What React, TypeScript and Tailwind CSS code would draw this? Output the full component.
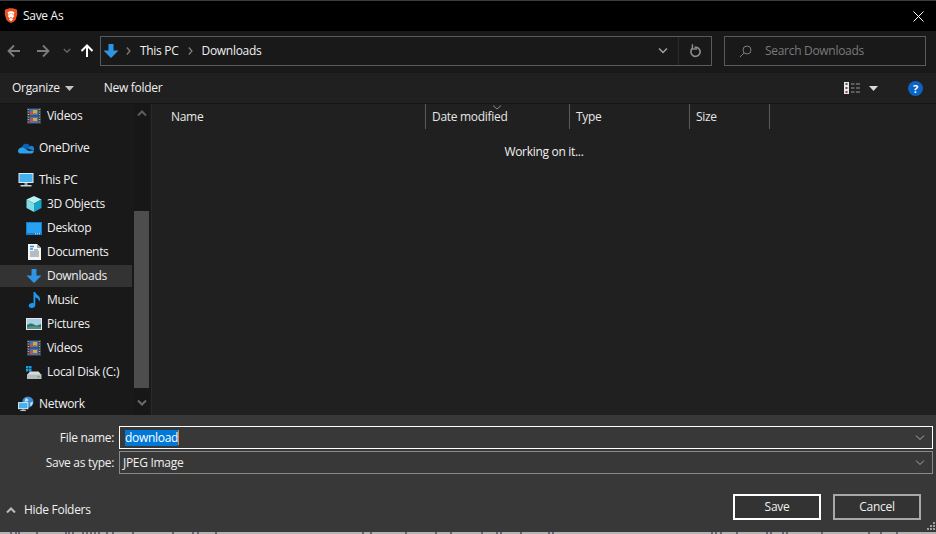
import React from "react";

function Brave() {
  return (
    <svg width="14" height="16" viewBox="0 0 14 16">
      <path d="M3.500 1 5 .2h4L10.500 1l2 .2.9 1.800-.5 1.300.5 1.400-1.900 6.300-2 1.700L7 14.900l-2.500-1.200-2-1.700L.6 5.700l.5-1.400L.6 3l.9-1.800z" fill="#f0501e" />
      <path d="M3.500 4.500 5.600 3.300h2.800L10.500 4.500 9.300 7l1 1L8 10.500l1 1L7 13l-2-1.500 1-1L3.700 8l1-1z" fill="#fff" />
      <path d="M5.800 8.500 7 9.500l1.200-1L7 11z" fill="#f0501e" />
      <path d="M5 5.500h1.500L6 6.800zM9 5.500H7.500L8 6.800z" fill="#f0501e" />
    </svg>
  );
}

function BlueDown({ s = 16 }: { s?: number }) {
  return (
    <svg width={s} height={s} viewBox="0 0 16 16">
      <path d="M5.500 1h5v6.500H15.500L8 15 .5 7.500h5z" fill="#2e95e4" />
    </svg>
  );
}

function VideoIcon() {
  return (
    <svg width="14" height="16" viewBox="0 0 14 16">
      <rect width="14" height="16" fill="#3a3a3a" />
      <rect x="2.500" y="1" width="9" height="6.500" fill="#3f74c4" />
      <rect x="2.500" y="8.500" width="9" height="6.500" fill="#3f74c4" />
      <rect x="6" y="2" width="4" height="3.500" fill="#d9a62e" />
      <rect x="3" y="4" width="3" height="3" fill="#c9503f" />
      <rect x="6" y="10" width="4" height="3" fill="#d9a62e" />
      <rect x="3" y="11" width="3" height="3" fill="#c9503f" />
      <path d="M.8 1.500h1M.8 4h1M.8 6.500h1M.8 9h1M.8 11.500h1M.8 14h1M12.200 1.500h1M12.200 4h1M12.200 6.500h1M12.200 9h1M12.200 11.500h1M12.200 14h1" stroke="#cfcfcf" strokeWidth="1" />
    </svg>
  );
}

function OneDrive() {
  return (
    <svg width="16" height="12" viewBox="0 0 16 12">
      <path d="M4 5.500A4.200 4.200 0 0 1 12 4.200l-4 3.300-3-1.800z" fill="#0a62b5" />
      <path d="M12 4.200A3 3 0 0 1 15.800 8.500L9 6.500z" fill="#1583d8" />
      <path d="M4.600 5.200 11 9l4.800-.5c0 2-1 3-2.300 3H2.500C.5 11.500 0 10 0 9c0-2 2-3.800 4.600-3.800z" fill="#2ca0ea" />
    </svg>
  );
}

function ThisPC() {
  return (
    <svg width="16" height="16" viewBox="0 0 16 16">
      <rect x=".5" y="1" width="15" height="10" fill="#dbe9f2" />
      <rect x="1.500" y="2" width="13" height="8" fill="#45b0ee" />
      <rect x="6.500" y="11" width="3" height="2" fill="#8fa3b0" />
      <rect x="2.500" y="13" width="11" height="1.500" fill="#c8d2d9" />
    </svg>
  );
}

function Cube() {
  return (
    <svg width="16" height="16" viewBox="0 0 16 16">
      <path d="M8 0 15.500 3.500 8 7.500.5 3.500z" fill="#b7f2f5" />
      <path d="M.5 3.500 8 7.500V16L.5 12z" fill="#7fdce6" />
      <path d="M15.500 3.500 8 7.500V16l7.500-4z" fill="#15a5c9" />
    </svg>
  );
}

function DesktopIcon() {
  return (
    <svg width="16" height="13" viewBox="0 0 16 13">
      <rect x="0" y="0" width="16" height="13" fill="#0e7fd6" />
      <rect x="1" y="1" width="14" height="10" fill="#2ba0ee" />
      <path d="M9 11.800h1M11 11.800h1M13 11.800h1" stroke="#e6f4fd" strokeWidth="1" />
    </svg>
  );
}

function DocIcon() {
  return (
    <svg width="13" height="16" viewBox="0 0 13 16">
      <path d="M0 0h9l4 4v12H0z" fill="#f4f6f7" />
      <path d="M9 0l4 4H9z" fill="#9aa6ad" />
      <path d="M2 8h9M2 10h9M2 12h9M6 6h4" stroke="#75838b" strokeWidth="1" />
      <path d="M2 2.500h4M2 5h3" stroke="#2b8fdc" strokeWidth="1.500" />
    </svg>
  );
}

function MusicIcon() {
  return (
    <svg width="13" height="16" viewBox="0 0 13 16">
      <path d="M5.500 0h1.800c.3 2.500 4.700 3.500 4.700 7 0 1.200-.4 2-1 2.800.2-2.500-2-3.800-3.700-4.500V13c0 1.700-1.700 3-3.700 3C1.800 16 .7 15 .7 13.800c0-1.500 1.600-2.800 3.500-2.800.5 0 .9.100 1.300.2z" fill="#1c97ea" />
    </svg>
  );
}

function PicturesIcon() {
  return (
    <svg width="16" height="12" viewBox="0 0 16 12">
      <rect width="16" height="12" fill="#e4e8ea" />
      <rect x="1" y="1" width="14" height="10" fill="#a8cfe2" />
      <path d="M1 7c3-2 5-2 7-.5s4 1 7-.5v5H1z" fill="#2e7768" />
      <path d="M1 9c4-1 9-1 14 0v2H1z" fill="#5c8f88" />
    </svg>
  );
}

function DiskIcon() {
  return (
    <svg width="16" height="13" viewBox="0 0 16 13">
      <path d="M0 0h2.500v2.500H0zM3 0h2.500v2.500H3zM0 3h2.500v2.500H0zM3 3h2.500v2.500H3z" fill="#15a0ea" />
      <path d="M4 5.500h8.500L15.500 9H1z" fill="#d8dde0" />
      <rect x="1" y="8.500" width="14.500" height="4.500" fill="#b6bdbf" />
      <rect x="11.500" y="10" width="2" height="1.500" fill="#4cc04c" />
    </svg>
  );
}

function NetworkIcon() {
  return (
    <svg width="17" height="16" viewBox="0 0 17 16">
      <circle cx="10.500" cy="6" r="6" fill="#3d8ad0" />
      <path d="M8 1.500c2 .5 3.500 1.500 3 3-1 1-3 .5-4 1.500zM13 6.500l2.800-1c0 2.500-1 4-2.800 5z" fill="#bfe1f4" />
      <rect x="0" y="6" width="11" height="7.500" fill="#dbeaf3" />
      <rect x="1" y="7" width="9" height="5.500" fill="#45b0ee" />
      <rect x="4" y="13.500" width="3" height="1" fill="#8fa3b0" />
      <rect x="2.500" y="14.500" width="6" height="1" fill="#c8d2d9" />
    </svg>
  );
}

function Row({ icon, label, active, level = 1 }: { icon: React.ReactNode; label: string; active?: boolean; level?: number }) {
  return (
    <div className={`flex h-[22px] items-center ${active ? "bg-[#333333]" : ""} ${level === 1 ? "pl-[26px]" : "pl-[18px]"}`}>
      <span className="flex w-[16px] shrink-0 items-center justify-center">{icon}</span>
      <span className="ml-[5px]">{label}</span>
    </div>
  );
}

function Chevron({ className = "", stroke = "#8a8a8a", w = 1.500, up = false }: { className?: string; stroke?: string; w?: number; up?: boolean }) {
  return (
    <svg width="10" height="6" viewBox="0 0 10 6" className={className}>
      <path d={up ? "M1 5.500 5 1.500l4 4" : "M1 .5l4 4 4-4"} fill="none" stroke={stroke} strokeWidth={w} />
    </svg>
  );
}

function Arrow({ color, dir }: { color: string; dir: "l" | "r" | "u" }) {
  const rot = dir === "l" ? "" : dir === "r" ? "rotate-180" : "rotate-90";
  return (
    <svg width="14" height="14" viewBox="0 0 14 14" className={rot}>
      <path d="M13 7H2M7 1.500 1.500 7 7 12.500" fill="none" stroke={color} strokeWidth={dir === "u" ? 2 : 1.800} />
    </svg>
  );
}

function HeaderCell({ w, label, sort }: { w: string; label: string; sort?: boolean }) {
  return (
    <div className={`relative flex h-[25px] items-center border-r border-[#5a5a5a] ${w}`}>
      {sort && (
        <svg width="10" height="5" viewBox="0 0 10 5" className="absolute left-[66px] top-[1px]">
          <path d="M1 .5 5 4 9 .5" fill="none" stroke="#8a8a8a" strokeWidth="1" />
        </svg>
      )}
      <span>{label}</span>
    </div>
  );
}

const specks = [10, 15, 18, 36, 65, 68, 72, 82, 86, 90, 94, 98, 106, 112, 132, 172, 192, 197, 215, 362, 370, 405, 435, 450, 481, 496, 500, 520, 548, 552, 711, 715, 720, 736, 766, 770, 782, 786, 821, 868, 880, 896];

export default function App() {
  return (
    <div className="flex h-[534px] w-[936px] flex-col overflow-hidden bg-[#191919] text-[12px] leading-[16px] tracking-[-0.3px] text-[#f0f0f0] [font-family:'Open_Sans','Noto_Sans',sans-serif]">
      {/* title bar */}
      <div className="h-px bg-[#3c3c3c]" />
      <div className="flex h-[30px] items-center bg-black pl-[4px] pr-[12px]">
        <Brave />
        <span className="ml-[5px] text-[#f4f4f4]">Save As</span>
        <svg width="11" height="11" viewBox="0 0 11 11" className="ml-auto">
          <path d="M.5.500l10 10M10.500.500l-10 10" stroke="#fff" strokeWidth="1" />
        </svg>
      </div>

      {/* navigation */}
      <div className="flex h-[42px] items-center bg-[#191919] pb-[2px] pl-[7px]">
        <Arrow color="#7c7c7c" dir="l" />
        <span className="ml-[15px]"><Arrow color="#7c7c7c" dir="r" /></span>
        <span className="ml-[13px]"><Chevron stroke="#6e6e6e" w={1.500} className="w-[8px]" /></span>
        <span className="ml-[9px]"><Arrow color="#ffffff" dir="u" /></span>
        <div className="ml-[6px] flex h-[30px] w-[612px] items-center border border-[#5a5a5a]">
          <span className="ml-[2px]"><BlueDown /></span>
          <svg width="5" height="8" viewBox="0 0 5 8" className="ml-[7px]"><path d="M.8.500 4 4 .8 7.500" fill="none" stroke="#808080" strokeWidth="1.200" /></svg>
          <span className="ml-[9px]">This PC</span>
          <svg width="5" height="8" viewBox="0 0 5 8" className="ml-[9px]"><path d="M.8.500 4 4 .8 7.500" fill="none" stroke="#808080" strokeWidth="1.200" /></svg>
          <span className="ml-[9px]">Downloads</span>
          <span className="ml-auto flex h-full items-center">
            <Chevron stroke="#a0a0a0" w={1.500} />
            <span className="ml-[10px] flex h-full w-[33px] items-center justify-center border-l border-[#2a2a2a]">
              <svg width="12" height="14" viewBox="0 0 12 14">
                <path d="M3.600 4.200A4.600 4.600 0 1 0 7.500 3.300L5.500 3.200" fill="none" stroke="#8f8f8f" strokeWidth="1.600" />
                <path d="M3.500.3 3.300 4.800 8 5" fill="none" stroke="#8f8f8f" strokeWidth="1.400" />
              </svg>
            </span>
          </span>
        </div>
        <div className="ml-[12px] flex h-[30px] w-[202px] items-center border border-[#5a5a5a] text-[#7a7a7a]">
          <svg width="13" height="13" viewBox="0 0 13 13" className="ml-[14px]">
            <circle cx="8" cy="5" r="4" fill="none" stroke="#7c7c7c" strokeWidth="1" />
            <path d="M5 8 .8 12.200" stroke="#7c7c7c" strokeWidth="1" />
          </svg>
          <span className="ml-[13px]">Search Downloads</span>
        </div>
      </div>

      {/* toolbar */}
      <div className="flex h-[30px] items-center bg-[#202020] pl-[12px] pr-[13px]">
        <span>Organize</span>
        <svg width="9" height="5" viewBox="0 0 9 5" className="ml-[5px]"><path d="M0 0h9L4.500 5z" fill="#c4c4c4" /></svg>
        <span className="ml-[30px]">New folder</span>
        <svg width="16" height="12" viewBox="0 0 16 12" className="ml-auto">
          <rect width="5" height="12" fill="#e8e8e8" />
          <rect x="1.500" y="1" width="2" height="2" fill="#555" />
          <rect x="1.500" y="5" width="2" height="2" fill="#555" />
          <rect x="1.500" y="9" width="2" height="2" fill="#b03030" />
          <path d="M7 2h3.500M12 2h4M7 6h3.500M12 6h4M7 10h3.500M12 10h4" stroke="#9a9a9a" strokeWidth="1" />
        </svg>
        <svg width="9" height="5" viewBox="0 0 9 5" className="ml-[9px]"><path d="M0 0h9L4.500 5z" fill="#d8d8d8" /></svg>
        <span className="ml-[30px] flex h-[15px] w-[15px] items-center justify-center rounded-full bg-[#0b63c5] text-[11px] font-bold leading-none text-white">?</span>
      </div>

      {/* main */}
      <div className="flex h-[312px] border-t border-[#141414]">
        <div className="flex w-[132px] shrink-0 flex-col gap-[2px] overflow-hidden bg-[#191919] pt-px">
          <Row icon={<VideoIcon />} label="Videos" />
          <div className="mt-[8px]"><Row level={0} icon={<OneDrive />} label="OneDrive" /></div>
          <div className="mt-[8px]"><Row level={0} icon={<ThisPC />} label="This PC" /></div>
          <Row icon={<Cube />} label="3D Objects" />
          <Row icon={<DesktopIcon />} label="Desktop" />
          <Row icon={<DocIcon />} label="Documents" />
          <Row active icon={<BlueDown />} label="Downloads" />
          <Row icon={<MusicIcon />} label="Music" />
          <Row icon={<PicturesIcon />} label="Pictures" />
          <Row icon={<VideoIcon />} label="Videos" />
          <Row icon={<DiskIcon />} label="Local Disk (C:)" />
          <div className="mt-[8px]"><Row level={0} icon={<NetworkIcon />} label="Network" /></div>
        </div>
        <div className="ml-[2px] flex w-[15px] shrink-0 flex-col items-center bg-[#171717]">
          <Chevron up stroke="#5e5e5e" w={2} className="mt-[6px]" />
          <div className="mt-[95px] h-[177px] w-full bg-[#4d4d4d]" />
          <Chevron stroke="#6a6a6a" w={2} className="mt-[12px]" />
        </div>
        <div className="w-[3px] shrink-0 border-r border-[#2a2a2a] bg-[#191919]" />
        <div className="flex flex-1 flex-col bg-[#202020]">
          <div className="flex h-[25px] text-[#e6e6e6]">
            <HeaderCell w="w-[274px] pl-[19px]" label="Name" />
            <HeaderCell w="w-[144px] pl-[6px]" label="Date modified" sort />
            <HeaderCell w="w-[120px] pl-[6px]" label="Type" />
            <HeaderCell w="w-[80px] pl-[6px]" label="Size" />
          </div>
          <div className="mt-[15px] text-center">Working on it...</div>
        </div>
      </div>

      {/* footer */}
      <div className="relative flex h-[117px] flex-col bg-[#383838] pl-[6px] pr-[3px] pt-[11px]">
        <div className="flex h-[23px] items-center">
          <span className="w-[108px] text-right">File name:</span>
          <div className="ml-[5px] flex h-full flex-1 items-center border border-white pl-[5px] pr-[7px]">
            <span className="bg-[#0078d7] text-white">download</span>
            <span className="h-[15px] w-px bg-[#f08030]" />
            <Chevron stroke="#a8a8a8" w={1} className="ml-auto" />
          </div>
        </div>
        <div className="mt-[2px] flex h-[23px] items-center">
          <span className="w-[108px] text-right">Save as type:</span>
          <div className="ml-[5px] flex h-full flex-1 items-center border border-[#8a8a8a] pl-[3px] pr-[7px]">
            <span>JPEG Image</span>
            <Chevron stroke="#a8a8a8" w={1} className="ml-auto" />
          </div>
        </div>
        <div className="mt-[20px] flex h-[26px] items-center pr-[12px]">
          <Chevron up stroke="#bdbdbd" w={2} className="mr-[8px] mt-[6px]" />
          <span className="mt-[6px]">Hide Folders</span>
          <button className="ml-auto box-border h-[26px] w-[88px] border-2 border-white bg-[#333333]">Save</button>
          <button className="ml-[12px] box-border h-[26px] w-[88px] border-2 border-[#a8a8a8] bg-[#333333]">Cancel</button>
        </div>
        <svg width="8" height="8" viewBox="0 0 8 8" className="absolute bottom-[2px] right-px">
          <path d="M6 0h2v2H6zM3 3h2v2H3zM6 3h2v2H6zM0 6h2v2H0zM3 6h2v2H3zM6 6h2v2H6z" fill="#a0a0a0" />
        </svg>
      </div>

      {/* sliver of the page behind */}
      <svg width="936" height="2" viewBox="0 0 936 2" className="block shrink-0 bg-[#b4b4b4]">
        {specks.map((x) => (
          <rect key={x} x={x} y="0" width="2" height="2" fill="#6a6a72" />
        ))}
      </svg>
    </div>
  );
}
